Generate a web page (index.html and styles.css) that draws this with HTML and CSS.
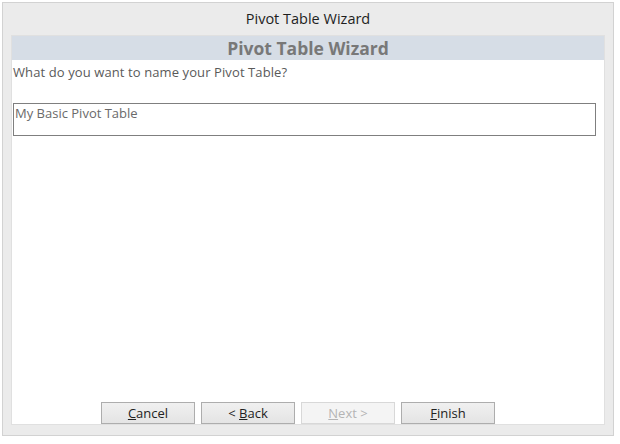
FILE: index.html
```html
<!DOCTYPE html>
<html lang="en">
<head>
    <meta charset="UTF-8">
    <title>Pivot Table Wizard</title>
    <link rel="stylesheet" href="styles.css">
</head>
<body>

<div class="window">
    <div class="title">Pivot Table Wizard</div>
    <div class="panel">
        <div class="banner">Pivot Table Wizard</div>
        <div class="prompt">What do you want to name your Pivot Table?</div>
        <div class="name-box">My Basic Pivot Table</div>
        <div class="buttons">
            <button class="btn"><u>C</u>ancel</button>
            <button class="btn">&lt; <u>B</u>ack</button>
            <button class="btn" disabled><u>N</u>ext &gt;</button>
            <button class="btn"><u>F</u>inish</button>
        </div>
    </div>
</div>

</body>
</html>
```

FILE: styles.css
```css
body {
    margin: 0;
    background-color: #fff;
    font-family: "Open Sans", "Noto Sans", Arial, sans-serif;
}
.window {
    margin: 2px;
    width: 612px;
    height: 434px;
    box-sizing: border-box;
    border: 1px solid #d2d2d2;
    background-color: #ebebeb;
    display: flex;
    flex-direction: column;
    padding: 0 8px 10px 8px;
}
.title {
    height: 32px;
    line-height: 32px;
    text-align: center;
    font-size: 14.5px;
    color: #1e1e1e;
}
.panel {
    flex: 1;
    background-color: #fff;
    border: 1px solid #e0e0e0;
    display: flex;
    flex-direction: column;
}
.banner {
    height: 24px;
    line-height: 24px;
    background-color: #d6dde6;
    text-align: center;
    font-size: 17.5px;
    font-weight: bold;
    color: #787878;
}
.prompt {
    font-size: 13px;
    letter-spacing: 0.1px;
    color: #5a5a5a;
    padding: 3px 1px;
}
.name-box {
    margin: 19px 8px 0 1px;
    height: 33px;
    box-sizing: border-box;
    border: 1px solid #7f7f7f;
    font-size: 13px;
    color: #6a6a6a;
    padding: 0 1px;
}
.buttons {
    margin-top: auto;
    display: flex;
    gap: 6px;
    padding-left: 89px;
}
.btn {
    width: 94px;
    height: 22px;
    border: 1px solid #adadad;
    background: linear-gradient(#f0f0f0, #e4e4e4);
    font-family: "Open Sans", "Noto Sans", Arial, sans-serif;
    font-size: 13px;
    color: #222;
    padding: 0;
}
.btn:disabled {
    background: #f4f4f4;
    border-color: #d8d8d8;
    color: #b4b4b4;
}
```
